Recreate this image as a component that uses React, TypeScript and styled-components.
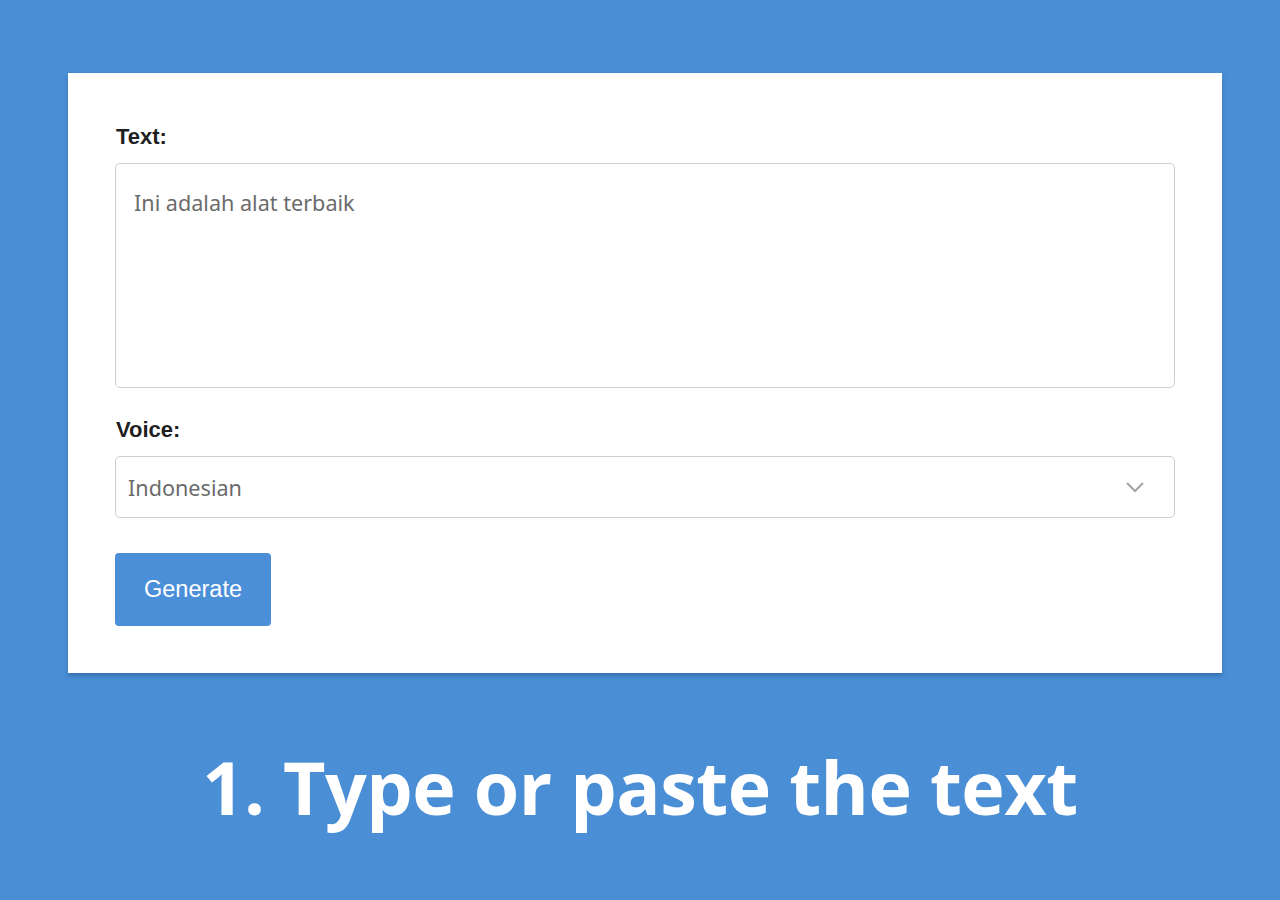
import styled, { createGlobalStyle } from "styled-components";

const GlobalStyle = createGlobalStyle`
  html, body {
    margin: 0;
    padding: 0;
    background: #4a8ed6;
  }
  * {
    box-sizing: border-box;
  }
`;

const Page = styled.div`
  width: 1280px;
  height: 900px;
  background: #4a8ed6;
  display: flex;
  flex-direction: column;
  padding: 73px 0 0 68px;
`;

const Card = styled.form`
  width: 1154px;
  height: 600px;
  background: #fff;
  box-shadow: 0 3px 4px rgba(30, 60, 110, 0.35);
  padding: 51px 47px 0 47px;
  display: flex;
  flex-direction: column;
`;

const Label = styled.label`
  display: block;
  font-family: "Liberation Sans", Arial, sans-serif;
  font-weight: 700;
  font-size: 22px;
  color: #1f1f1f;
  margin: 0 0 13px 1px;
  line-height: 26px;
`;

const TextArea = styled.textarea`
  width: 100%;
  height: 225px;
  resize: none;
  border: 1px solid #cfcfcf;
  border-radius: 5px;
  padding: 24px 18px;
  font-family: "Noto Sans", "Open Sans", sans-serif;
  font-size: 21.6px;
  color: #6b6b6b;
  outline: none;
  margin-bottom: 29px;
`;

const SelectWrap = styled.div`
  position: relative;
  width: 100%;
  height: 62px;
  margin-bottom: 35px;
`;

const Select = styled.select`
  appearance: none;
  width: 100%;
  height: 100%;
  border: 1px solid #cfcfcf;
  border-radius: 5px;
  background: #fff;
  padding: 0 12px;
  font-family: "Noto Sans", "Open Sans", sans-serif;
  font-size: 21.6px;
  color: #6b6b6b;
  outline: none;
`;

const Chevron = styled.svg`
  position: absolute;
  right: 30px;
  top: 25px;
  pointer-events: none;
`;

const Button = styled.button`
  width: 156px;
  height: 73px;
  border: none;
  border-radius: 4px;
  background: #4a8fd8;
  color: #fff;
  font-family: "Liberation Sans", Arial, sans-serif;
  font-size: 23.5px;
  cursor: pointer;
`;

const Caption = styled.h1`
  flex: 1;
  margin: 0 0 0 -68px;
  display: flex;
  align-items: center;
  justify-content: center;
  font-family: "Open Sans", "Noto Sans", sans-serif;
  font-weight: 700;
  font-size: 73.5px;
  color: #fff;
  letter-spacing: -0.5px;
`;

export default function App() {
  return (
    <>
      <GlobalStyle />
      <Page>
        <Card onSubmit={(e) => e.preventDefault()}>
          <Label htmlFor="text">Text:</Label>
          <TextArea id="text" defaultValue="Ini adalah alat terbaik" />
          <Label htmlFor="voice">Voice:</Label>
          <SelectWrap>
            <Select id="voice" defaultValue="id">
              <option value="id">Indonesian</option>
              <option value="en">English</option>
            </Select>
            <Chevron width="20" height="12" viewBox="0 0 20 12">
              <path d="M2 2 L10 10 L18 2" fill="none" stroke="#a3a3a3" strokeWidth="2" />
            </Chevron>
          </SelectWrap>
          <div>
            <Button type="submit">Generate</Button>
          </div>
        </Card>
        <Caption>1. Type or paste the text</Caption>
      </Page>
    </>
  );
}
